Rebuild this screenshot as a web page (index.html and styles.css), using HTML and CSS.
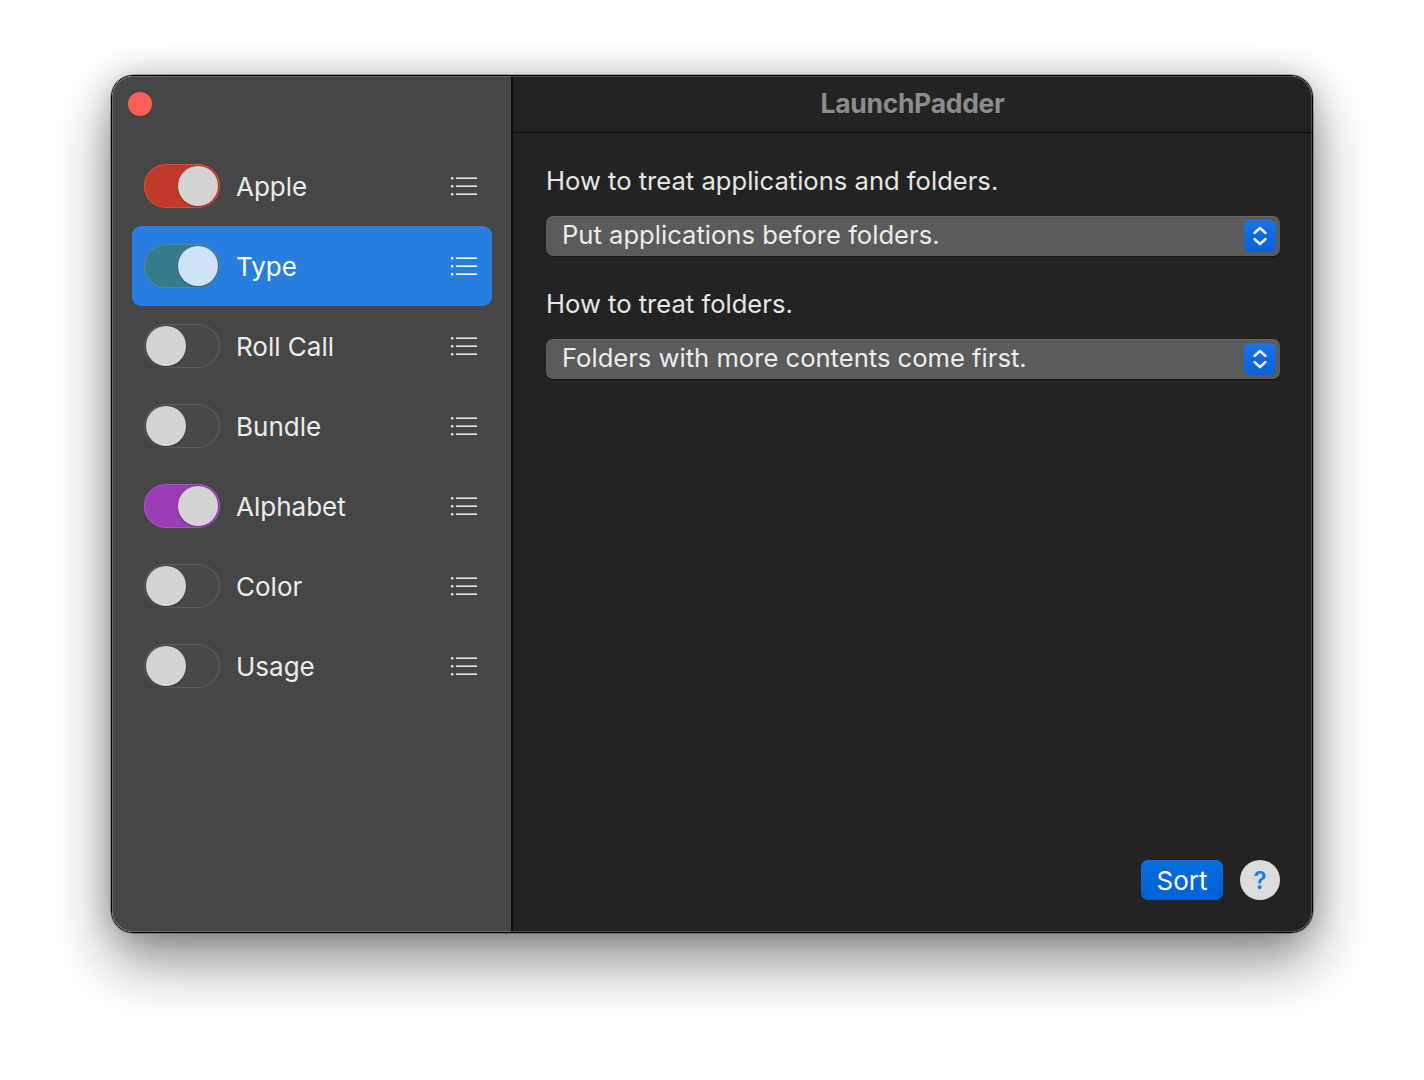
FILE: index.html
```html
<!DOCTYPE html>
<html>
<head>
<meta charset="utf-8">
<link rel="stylesheet" href="styles.css">
</head>
<body>
<div class="window">
  <aside class="sidebar">
    <div class="traffic"><span class="close"></span></div>
    <ul class="rules">
      <li class="rule">
        <span class="toggle on red"><span class="knob"></span></span>
        <span class="name">Apple</span>
        <svg class="list" viewBox="0 0 26 20"><rect x="0" y="1" width="2.4" height="2.4" rx="0.6"/><rect x="0" y="9" width="2.4" height="2.4" rx="0.6"/><rect x="0" y="17" width="2.4" height="2.4" rx="0.6"/><rect x="5" y="1.4" width="21" height="1.6"/><rect x="5" y="9.4" width="21" height="1.6"/><rect x="5" y="17.4" width="21" height="1.6"/></svg>
      </li>
      <li class="rule selected">
        <span class="toggle on teal"><span class="knob"></span></span>
        <span class="name">Type</span>
        <svg class="list" viewBox="0 0 26 20"><rect x="0" y="1" width="2.4" height="2.4" rx="0.6"/><rect x="0" y="9" width="2.4" height="2.4" rx="0.6"/><rect x="0" y="17" width="2.4" height="2.4" rx="0.6"/><rect x="5" y="1.4" width="21" height="1.6"/><rect x="5" y="9.4" width="21" height="1.6"/><rect x="5" y="17.4" width="21" height="1.6"/></svg>
      </li>
      <li class="rule">
        <span class="toggle"><span class="knob"></span></span>
        <span class="name">Roll Call</span>
        <svg class="list" viewBox="0 0 26 20"><rect x="0" y="1" width="2.4" height="2.4" rx="0.6"/><rect x="0" y="9" width="2.4" height="2.4" rx="0.6"/><rect x="0" y="17" width="2.4" height="2.4" rx="0.6"/><rect x="5" y="1.4" width="21" height="1.6"/><rect x="5" y="9.4" width="21" height="1.6"/><rect x="5" y="17.4" width="21" height="1.6"/></svg>
      </li>
      <li class="rule">
        <span class="toggle"><span class="knob"></span></span>
        <span class="name">Bundle</span>
        <svg class="list" viewBox="0 0 26 20"><rect x="0" y="1" width="2.4" height="2.4" rx="0.6"/><rect x="0" y="9" width="2.4" height="2.4" rx="0.6"/><rect x="0" y="17" width="2.4" height="2.4" rx="0.6"/><rect x="5" y="1.4" width="21" height="1.6"/><rect x="5" y="9.4" width="21" height="1.6"/><rect x="5" y="17.4" width="21" height="1.6"/></svg>
      </li>
      <li class="rule">
        <span class="toggle on purple"><span class="knob"></span></span>
        <span class="name">Alphabet</span>
        <svg class="list" viewBox="0 0 26 20"><rect x="0" y="1" width="2.4" height="2.4" rx="0.6"/><rect x="0" y="9" width="2.4" height="2.4" rx="0.6"/><rect x="0" y="17" width="2.4" height="2.4" rx="0.6"/><rect x="5" y="1.4" width="21" height="1.6"/><rect x="5" y="9.4" width="21" height="1.6"/><rect x="5" y="17.4" width="21" height="1.6"/></svg>
      </li>
      <li class="rule">
        <span class="toggle"><span class="knob"></span></span>
        <span class="name">Color</span>
        <svg class="list" viewBox="0 0 26 20"><rect x="0" y="1" width="2.4" height="2.4" rx="0.6"/><rect x="0" y="9" width="2.4" height="2.4" rx="0.6"/><rect x="0" y="17" width="2.4" height="2.4" rx="0.6"/><rect x="5" y="1.4" width="21" height="1.6"/><rect x="5" y="9.4" width="21" height="1.6"/><rect x="5" y="17.4" width="21" height="1.6"/></svg>
      </li>
      <li class="rule">
        <span class="toggle"><span class="knob"></span></span>
        <span class="name">Usage</span>
        <svg class="list" viewBox="0 0 26 20"><rect x="0" y="1" width="2.4" height="2.4" rx="0.6"/><rect x="0" y="9" width="2.4" height="2.4" rx="0.6"/><rect x="0" y="17" width="2.4" height="2.4" rx="0.6"/><rect x="5" y="1.4" width="21" height="1.6"/><rect x="5" y="9.4" width="21" height="1.6"/><rect x="5" y="17.4" width="21" height="1.6"/></svg>
      </li>
    </ul>
  </aside>
  <main class="detail">
    <header class="titlebar">LaunchPadder</header>
    <section class="content">
      <div class="field">
        <div class="label">How to treat applications and folders.</div>
        <div class="popup">
          <span class="popup-text">Put applications before folders.</span>
          <span class="stepper"><svg viewBox="0 0 32 32"><path d="M10.5 13 L16 8 L21.5 13 M10.5 19 L16 24 L21.5 19" fill="none" stroke="#e8eefb" stroke-width="2.4" stroke-linecap="round" stroke-linejoin="round"/></svg></span>
        </div>
      </div>
      <div class="field">
        <div class="label">How to treat folders.</div>
        <div class="popup">
          <span class="popup-text">Folders with more contents come first.</span>
          <span class="stepper"><svg viewBox="0 0 32 32"><path d="M10.5 13 L16 8 L21.5 13 M10.5 19 L16 24 L21.5 19" fill="none" stroke="#e8eefb" stroke-width="2.4" stroke-linecap="round" stroke-linejoin="round"/></svg></span>
        </div>
      </div>
      <div class="spacer"></div>
      <footer class="actions">
        <button class="sort">Sort</button>
        <button class="help">?</button>
      </footer>
    </section>
  </main>
</div>
</body>
</html>
```

FILE: styles.css
```css
* { box-sizing: border-box; }
html, body { margin: 0; padding: 0; background: #ffffff; }
body {
  width: 1424px;
  height: 1080px;
  padding: 75px 0 0 111px;
  font-family: Inter, "Noto Sans", "Liberation Sans", sans-serif;
  overflow: hidden;
}
.window {
  width: 1202px;
  height: 858px;
  border: 1px solid #000;
  border-radius: 22px;
  display: flex;
  overflow: hidden;
  box-shadow: 0 0 0 0.5px rgba(0,0,0,0.5), 0 28px 60px rgba(0,0,0,0.45), 0 0 30px rgba(0,0,0,0.2);
  position: relative;
}
.window::after {
  content: "";
  position: absolute;
  inset: 0;
  border-radius: 21px;
  box-shadow: inset 0 0 0 1px rgba(255,255,255,0.18);
  pointer-events: none;
}
.sidebar {
  width: 401px;
  background: #464646;
  border-right: 2px solid #0d0d0d;
  padding: 16px 19px 0 20px;
  display: flex;
  flex-direction: column;
}
.traffic { height: 24px; }
.close {
  display: block;
  width: 24px;
  height: 24px;
  margin-left: -4px;
  border-radius: 50%;
  background: #fe5f57;
}
.rules {
  list-style: none;
  margin: 30px 0 0;
  padding: 0;
}
.rule {
  height: 80px;
  display: flex;
  align-items: center;
  padding: 0 15px 0 12px;
  border-radius: 9px;
  color: #ececec;
}
.rule.selected { background: #267fe0; color: #fff; }
.toggle {
  width: 76px;
  height: 44px;
  border-radius: 22px;
  background: #484848;
  box-shadow: inset 0 0 0 1px #5e5e5e;
  position: relative;
  flex: none;
}
.toggle .knob {
  position: absolute;
  top: 2px;
  left: 2px;
  width: 40px;
  height: 40px;
  border-radius: 50%;
  background: #d4d4d4;
  box-shadow: 0 1px 2px rgba(0,0,0,0.3);
}
.toggle.on .knob { left: 34px; }
.toggle.red { background: linear-gradient(#c03a2b, #c0392a); box-shadow: inset 0 0 0 1px #d0503f; }
.toggle.teal { background: #367a8d; box-shadow: inset 0 0 0 1px #4b8ea3; }
.toggle.teal .knob { background: #cfe2f7; }
.toggle.purple { background: #9a3db4; box-shadow: inset 0 0 0 1px #a953c1; }
.name {
  margin-left: 16px;
  font-size: 26px;
  flex: 1;
}
.list {
  width: 26px;
  height: 20px;
  fill: #e6e6e6;
  flex: none;
}
.rule.selected .list { fill: #fff; }
.detail {
  flex: 1;
  background: #232323;
  display: flex;
  flex-direction: column;
}
.titlebar {
  height: 57px;
  border-bottom: 1px solid #0b0b0b;
  display: flex;
  align-items: center;
  justify-content: center;
  color: #8c8c8c;
  font-weight: 700;
  font-size: 26.5px;
  letter-spacing: -0.3px;
  padding-bottom: 2px;
}
.content {
  flex: 1;
  padding: 33px 32px 32px 33px;
  display: flex;
  flex-direction: column;
}
.field { margin-bottom: 33px; }
.label {
  color: #e6e6e6;
  font-size: 25.6px;
  line-height: 30px;
  margin-bottom: 20px;
}
.popup {
  height: 40px;
  background: #5b5b5b;
  border-radius: 7px;
  box-shadow: inset 0 1px 0 rgba(255,255,255,0.08), 0 0.5px 1px rgba(0,0,0,0.5);
  display: flex;
  align-items: center;
  padding: 0 4px 0 16px;
}
.popup-text {
  flex: 1;
  color: #ececec;
  font-size: 25.6px;
  line-height: 30px;
  padding-bottom: 3px;
}
.stepper {
  width: 32px;
  height: 32px;
  border-radius: 6px;
  background: linear-gradient(#1a73e8, #0a60d6);
  display: flex;
}
.stepper svg { width: 32px; height: 32px; }
.spacer { flex: 1; }
.actions {
  display: flex;
  justify-content: flex-end;
  align-items: center;
  gap: 17px;
}
.sort {
  width: 82px;
  height: 40px;
  border: none;
  border-radius: 7px;
  background: linear-gradient(#0a6ee0, #0061d4);
  color: #fff;
  font-family: inherit;
  font-size: 26px;
  padding: 0;
}
.help {
  width: 40px;
  height: 40px;
  border: none;
  border-radius: 50%;
  background: #dcdcdc;
  color: #1b7cf0;
  font-family: inherit;
  font-weight: 600;
  font-size: 24px;
  padding: 0;
}
```
